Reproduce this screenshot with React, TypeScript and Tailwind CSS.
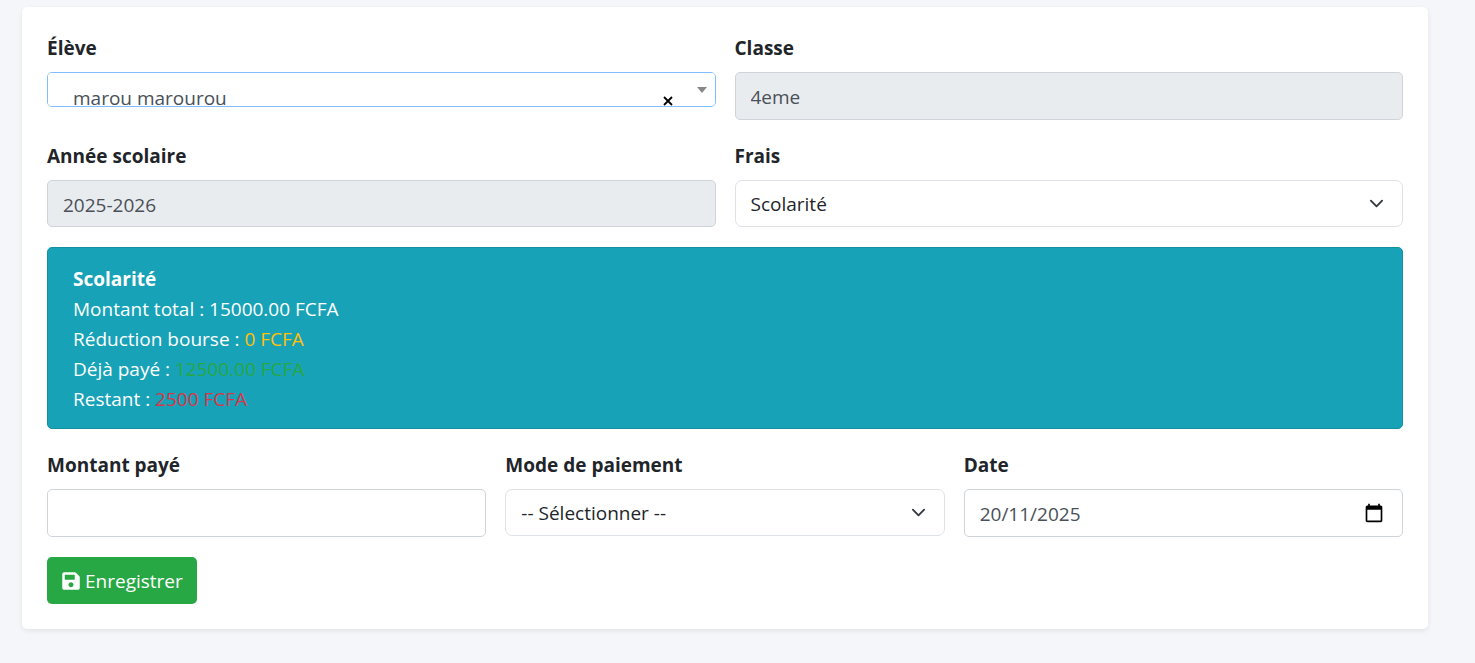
import { useState } from "react";
import type { ReactNode } from "react";
import { FaSave } from "react-icons/fa";

const inputClass =
    "block w-full pt-0.5 px-[15px] rounded-[5px] border border-[#ced4da] text-[#495057] outline-none";
const selectClass =
    "block w-full h-[47px] pl-[15px] pr-12 rounded-[7px] border border-[#dee2e6] bg-white text-[#212529] appearance-none outline-none";

function Field({ id, label, children }: { id: string; label: string; children: ReactNode }) {
    return (
        <div>
            <label htmlFor={id} className="block mb-2 font-bold leading-8">{label}</label>
            <div className="relative">{children}</div>
        </div>
    );
}

function Chevron() {
    return (
        <svg
            viewBox="0 0 16 16"
            className="pointer-events-none absolute right-[19px] top-4 size-[15px]"
            fill="none"
            stroke="#343a40"
            strokeWidth="2"
            strokeLinecap="round"
            strokeLinejoin="round"
        >
            <path d="m2 5 6 6 6-6" />
        </svg>
    );
}

function App() {
    const [eleve, setEleve] = useState("marou");
    const [montant, setMontant] = useState("");
    const [date, setDate] = useState("20/11/2025");

    return (
        <div className="min-h-screen bg-[#f4f6f9] pt-[7px] pl-[22px] pr-[47px] pb-8 font-['Open_Sans','Noto_Sans',sans-serif] text-[19px] leading-[30px] text-[#212529]">
            <form
                className="flex flex-col gap-5 rounded-[5px] bg-white p-[25px] shadow-[0_2px_5px_rgba(0,0,0,0.075)]"
                onSubmit={(e) => e.preventDefault()}
            >
                <div className="grid grid-cols-2 gap-x-[19px] gap-y-5">
                    <Field id="eleve" label="Élève">
                        {/* The list is taller than its frame, which cuts it off */}
                        <div className="h-[35px] overflow-hidden rounded-[5px] border border-[#80bdff]">
                            <select
                                id="eleve"
                                value={eleve}
                                onChange={(e) => setEleve(e.target.value)}
                                className="block w-full h-[50px] pl-[25px] pr-16 bg-white text-[#495057] appearance-none outline-none"
                            >
                                <option value=""></option>
                                <option value="marou">marou marourou</option>
                            </select>
                        </div>
                        <button
                            type="button"
                            aria-label="Effacer"
                            onClick={() => setEleve("")}
                            className="absolute right-[42px] bottom-0 flex size-3 items-center justify-center text-black"
                        >
                            <svg viewBox="0 0 10 10" className="size-2.5" stroke="currentColor" strokeWidth="1.8">
                                <path d="M1 1l8 8M9 1l-8 8" />
                            </svg>
                        </button>
                        <svg viewBox="0 0 10 6" className="pointer-events-none absolute right-[9px] top-[15px] h-1.5 w-2.5">
                            <path d="M0 0h10L5 6z" fill="#888" />
                        </svg>
                    </Field>

                    <Field id="classe" label="Classe">
                        <input id="classe" type="text" readOnly value="4eme" className={`${inputClass} h-12 bg-[#e9ecef]`} />
                    </Field>

                    <Field id="annee" label="Année scolaire">
                        <input id="annee" type="text" readOnly value="2025-2026" className={`${inputClass} h-[47px] bg-[#e9ecef]`} />
                    </Field>

                    <Field id="frais" label="Frais">
                        <select id="frais" className={selectClass}>
                            <option>Scolarité</option>
                        </select>
                        <Chevron />
                    </Field>
                </div>

                <div className="rounded-[5px] border border-[#148ea1] bg-[#17a2b8] px-[25px] pt-4 pb-3.5 text-white">
                    <p className="font-bold">Scolarité</p>
                    <p>Montant total : 15000.00 FCFA</p>
                    <p>Réduction bourse : <span className="text-[#ffc107]">0 FCFA</span></p>
                    <p>Déjà payé : <span className="text-[#28a745]">12500.00 FCFA</span></p>
                    <p>Restant : <span className="text-[#dc3545]">2500 FCFA</span></p>
                </div>

                <div className="grid grid-cols-3 gap-x-[19px]">
                    <Field id="montant" label="Montant payé">
                        <input
                            id="montant"
                            type="text"
                            inputMode="decimal"
                            value={montant}
                            onChange={(e) => setMontant(e.target.value)}
                            className={`${inputClass} h-12 bg-white`}
                        />
                    </Field>

                    <Field id="mode" label="Mode de paiement">
                        <select id="mode" className={selectClass}>
                            <option value="">-- Sélectionner --</option>
                            <option>Espèces</option>
                        </select>
                        <Chevron />
                    </Field>

                    <Field id="date" label="Date">
                        <input
                            id="date"
                            type="text"
                            value={date}
                            onChange={(e) => setDate(e.target.value)}
                            className={`${inputClass} h-12 bg-white`}
                        />
                        <button type="button" aria-label="Ouvrir le calendrier" className="absolute right-[19px] top-3.5 text-black">
                            <svg viewBox="0 0 24 24" className="size-5" fill="currentColor">
                                <path d="M20 3h-1V1h-2v2H7V1H5v2H4c-1.1 0-2 .9-2 2v16c0 1.1.9 2 2 2h16c1.1 0 2-.9 2-2V5c0-1.1-.9-2-2-2zm0 18H4V8h16v13z" />
                            </svg>
                        </button>
                    </Field>
                </div>

                <button
                    type="submit"
                    className="flex h-[47px] items-center gap-1 self-start rounded-[5px] bg-[#28a745] px-3.5 text-white"
                >
                    <FaSave className="size-5" />
                    Enregistrer
                </button>
            </form>
        </div>
    );
}

export default App;
